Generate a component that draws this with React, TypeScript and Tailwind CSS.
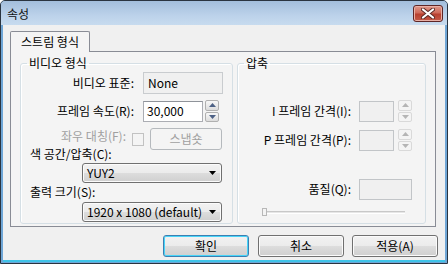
import React from "react";

const font = { fontFamily: '"Noto Sans CJK KR", "Liberation Sans", sans-serif' };

function Spin({ disabled }: { disabled?: boolean }) {
  const box = disabled
    ? "border-[#d9d9d9] bg-[#f4f4f4]"
    : "border-[#b0b0b0] bg-[linear-gradient(#f8f8f8,#dcdcdc)]";
  const fill = disabled ? "#b5b5b5" : "#4d6185";
  return (
    <div className="flex flex-col gap-[1px] w-[14px] h-[22px]">
      <div className={`flex-1 border rounded-[2px] flex items-center justify-center ${box}`}>
        <svg width="7" height="4" viewBox="0 0 7 4"><path d="M0 4 L3.5 0 L7 4 Z" fill={fill} /></svg>
      </div>
      <div className={`flex-1 border rounded-[2px] flex items-center justify-center ${box}`}>
        <svg width="7" height="4" viewBox="0 0 7 4"><path d="M0 0 L7 0 L3.5 4 Z" fill={fill} /></svg>
      </div>
    </div>
  );
}

function Combo({ text }: { text: string }) {
  return (
    <div className="ml-[61px] w-[140px] h-[20px] border border-[#707070] rounded-[3px] bg-[linear-gradient(#f2f2f2_0%,#ebebeb_50%,#dddddd_50%,#cfcfcf_100%)] shadow-[inset_0_0_0_1px_#fbfbfb] flex items-center pl-[4px] pr-[5px] text-[12px] leading-[16px] whitespace-nowrap">
      <span className="flex-1">{text}</span>
      <svg width="7" height="4" viewBox="0 0 7 4" className="shrink-0"><path d="M0 0 L7 0 L3.5 4 Z" fill="#000" /></svg>
    </div>
  );
}

function Button({ label, def }: { label: string; def?: boolean }) {
  return (
    <div
      className={`w-[86px] h-[22px] rounded-[3px] border flex items-center justify-center text-[12px] leading-[14px] bg-[linear-gradient(#f2f2f2_0%,#ebebeb_50%,#dddddd_50%,#cfcfcf_100%)] ${
        def
          ? "border-[#3c7fb1] shadow-[inset_0_0_0_1px_#48d5f9]"
          : "border-[#707070] shadow-[inset_0_0_0_1px_#fbfbfb]"
      }`}
    >
      {label}
    </div>
  );
}

export default function App() {
  return (
    <div style={font} className="w-[448px] h-[264px] flex flex-col border border-[#2a3440] rounded-t-[5px] bg-[#6fa6d6] text-black overflow-hidden">
      {/* Title bar */}
      <div className="h-[24px] shrink-0 flex items-start justify-between bg-[linear-gradient(#a3bedc,#bcd2ea_60%,#c7dbef)] -mx-[1px] pl-[7px] pr-[5px]">
        <span className="text-[12px] leading-[14px] mt-[6px] text-[#111]">속성</span>
        <div className="mt-[4px] w-[30px] h-[17px] rounded-[3px] border border-[#5e2626] bg-[linear-gradient(#e09a8c_0%,#cf6a5a_45%,#b8402f_55%,#c45a48_100%)] shadow-[inset_0_0_0_1px_#e9b0a6] flex items-center justify-center">
          <svg width="14" height="11" viewBox="0 0 14 11">
            <path d="M2 1.5 L12 9.5 M12 1.5 L2 9.5" stroke="#5a2a26" strokeWidth="4" strokeLinecap="round" />
            <path d="M2 1.5 L12 9.5 M12 1.5 L2 9.5" stroke="#ffffff" strokeWidth="2.2" strokeLinecap="round" />
          </svg>
        </div>
      </div>

      {/* Content */}
      <div className="flex-1 mx-[2px] mb-[1px] bg-[#f0f0f0] flex flex-col pl-[7px] pt-[6px] border-b-2 border-[#3fc3e8]">
        {/* Tab header */}
        <div className="flex">
          <div className="relative z-10 -mb-px w-[80px] h-[21px] border border-b-0 border-[#898c95] bg-[#f4f4f4] rounded-t-[2px] flex items-center justify-center text-[12px] leading-[14px]">
            스트림 형식
          </div>
        </div>
        {/* Tab panel */}
        <div className="w-[426px] h-[176px] border border-[#898c95] bg-[#f4f4f4] flex pl-[9px] pt-[4px] gap-[4px] text-[12px] leading-[14px]">
          {/* Left group */}
          <fieldset className="w-[213px] h-[168px] border border-[#d5dfe5] rounded-[3px] shadow-[inset_1px_1px_0_#fff]">
            <legend className="ml-[6px] px-[2px] text-[12px] leading-[14px]">비디오 형식</legend>
            <div className="flex flex-col">
              <div className="mt-[2px] flex items-center h-[22px]">
                <span className="w-[113px] text-right">비디오 표준:</span>
                <div className="ml-[9px] w-[80px] h-[22px] border border-[#c9cccf] bg-[#f0f0f0] flex items-center pl-[4px]">None</div>
              </div>
              <div className="mt-[6px] flex items-center h-[22px]">
                <span className="w-[113px] text-right">프레임 속도(R):</span>
                <div className="ml-[9px] w-[60px] h-[21px] border border-[#abadb3] border-t-[#8f939a] bg-white flex items-center pl-[3px]">30,000</div>
                <div className="ml-[2px]"><Spin /></div>
              </div>
              <div className="mt-[6px] flex items-center h-[22px]">
                <span className="self-start mt-[1px] w-[105px] text-right text-[#a0a0a0]">좌우 대칭(F):</span>
                <div className="ml-[6px] w-[12px] h-[13px] border border-[#c2c2c2] bg-[#f4f4f4]" />
                <div className="ml-[6px] w-[72px] h-[22px] border border-[#b5b9bd] rounded-[3px] bg-[#f4f4f4] flex items-center justify-center text-[#a0a0a0]">스냅숏</div>
              </div>
              <div className="-mt-[2px] pl-[9px] h-[12px] leading-[12px]">색 공간/압축(C):</div>
              <div className="mt-[3px]"><Combo text="YUY2" /></div>
              <div className="mt-[2px] pl-[9px] h-[14px]">출력 크기(S):</div>
              <div className="mt-[3px]"><Combo text="1920 x 1080 (default)" /></div>
            </div>
          </fieldset>

          {/* Right group */}
          <fieldset className="w-[189px] h-[168px] border border-[#d5dfe5] rounded-[3px] shadow-[inset_1px_1px_0_#fff]">
            <legend className="ml-[6px] px-[2px] text-[12px] leading-[14px]">압축</legend>
            <div className="flex flex-col">
              <div className="mt-[30px] flex items-center h-[22px]">
                <span className="w-[113px] text-right">I 프레임 간격(I):</span>
                <div className="ml-[8px] w-[35px] h-[21px] border border-[#c2c5c8] bg-[#f0f0f0]" />
                <div className="ml-[4px]"><Spin disabled /></div>
              </div>
              <div className="mt-[7px] flex items-center h-[22px]">
                <span className="w-[113px] text-right">P 프레임 간격(P):</span>
                <div className="ml-[8px] w-[35px] h-[21px] border border-[#c2c5c8] bg-[#f0f0f0]" />
                <div className="ml-[4px]"><Spin disabled /></div>
              </div>
              <div className="mt-[27px] flex items-center h-[22px]">
                <span className="w-[113px] text-right">품질(Q):</span>
                <div className="ml-[8px] w-[53px] h-[21px] border border-[#c2c5c8] bg-[#f0f0f0]" />
              </div>
              <div className="mt-[8px] flex items-center h-[8px] pl-[24px]">
                <div className="w-[5px] h-[8px] border border-[#b8b8b8] bg-[#f4f4f4]" />
                <div className="w-[138px] h-[3px] border-t border-[#c8c8c8] border-b border-b-white bg-[#e6e6e6]" />
              </div>
            </div>
          </fieldset>
        </div>

        {/* Buttons */}
        <div className="mt-[8px] flex pl-[153px] text-[12px]">
          <Button label="확인" def />
          <div className="ml-[9px]"><Button label="취소" /></div>
          <div className="ml-[8px]"><Button label="적용(A)" /></div>
        </div>
      </div>
    </div>
  );
}
